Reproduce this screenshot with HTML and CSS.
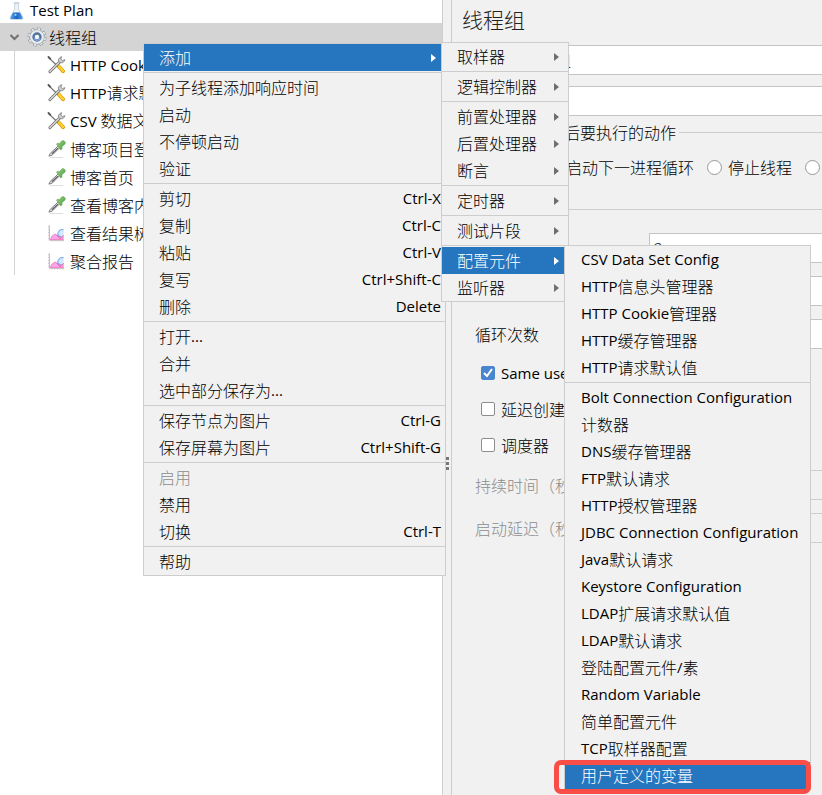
FILE: index.html
```html
<!DOCTYPE html>
<html lang="zh-CN">
<head>
<meta charset="utf-8">
<title>Test Plan</title>
<link rel="stylesheet" href="styles.css">
</head>
<body>
<svg class="defs" aria-hidden="true">
  <defs>
    <linearGradient id="green" x1="0" y1="0" x2="1" y2="1"><stop offset="0" stop-color="#9bd487"/><stop offset="1" stop-color="#4a9a3c"/></linearGradient>
    <linearGradient id="flask" x1="0" y1="0" x2="1" y2="0"><stop offset="0" stop-color="#5aa5ea"/><stop offset=".5" stop-color="#1765c4"/><stop offset="1" stop-color="#4c9be8"/></linearGradient>
    <symbol id="tools" viewBox="0 0 20 20">
      <path d="M12 11l5 5.500" stroke="#cf9500" stroke-width="4" stroke-linecap="round"/>
      <path d="M12 11l5 5.500" stroke="#ffcf2e" stroke-width="2.600" stroke-linecap="round"/>
      <path d="M2 2.500l9 8.500" stroke="#777" stroke-width="1.400" stroke-linecap="round"/>
      <path d="M1.500 1.500l2 2" stroke="#555" stroke-width="2" stroke-linecap="round"/>
      <path d="M3 17L13.500 6.500" stroke="#666" stroke-width="3" stroke-linecap="round"/>
      <path d="M3 17L13.500 6.500" stroke="#dcdcdc" stroke-width="1.500" stroke-linecap="round"/>
      <path d="M15.500 1.300a4 4 0 0 0-3.200 5.400 4 4 0 0 0 6.600-2.300l-2.600.9-1.800-1.500z" fill="#cfcfcf" stroke="#808080" stroke-width=".9"/>
    </symbol>
    <symbol id="dropper" viewBox="0 0 20 20">
      <path d="M3 19h14" stroke="#dcdcdc" stroke-width="1"/>
      <path d="M2 17.500l1.500-3 8-7.500 1.800 1.800-8 7.700z" fill="#eee" stroke="#777" stroke-width="1"/>
      <path d="M5 15.200l6.500-6.200" stroke="#555" stroke-width="1.200"/>
      <path d="M10 4.800l1.500-1 1.500.8 2.500-3c1.600-1.400 4.800.9 3.400 3.200l-3.300 2.900.3 2.100-1.500 1.200z" fill="url(#green)" stroke="#5fa352" stroke-width=".6"/>
    </symbol>
    <symbol id="chart" viewBox="0 0 20 20">
      <path d="M2.500 2v15.500H18" fill="none" stroke="#b0b0b0" stroke-width="1"/>
      <path d="M1 3.500h2M1 6.500h2M1 9.500h2M1 12.500h2M1 15.500h2M5 17v2M8 17v2M11 17v2M14 17v2M17 17v2" stroke="#c8c8c8" stroke-width="1"/>
      <path d="M3.500 17l1.500-3.500 3.500-2.500 3.500 2.500 5-1V17z" fill="#fba6ea" stroke="#ee6cb4" stroke-width=".8"/>
      <path d="M17.500 6.500c-4-.8-6.500 2-6 5.500 1.500 1.800 4 2.500 6 1.500z" fill="#d3e8ff"/>
      <path d="M17.500 6.500c-4-.8-6.500 2-6 5.500 1 1.300 2.300 2 3.500 2.200" fill="none" stroke="#7aacee" stroke-width="1.100"/>
      <path d="M10.500 12l3 4 4-3.500" fill="none" stroke="#e2609f" stroke-width="1"/>
    </symbol>
  </defs>
</svg>
<div class="app">
  <nav class="tree" aria-label="测试计划">
    <div class="node root">
      <svg class="flask" viewBox="0 0 16 20" aria-hidden="true">
        <path d="M6 1.500h4v6.500l4.800 9c.5 1-.2 2-1.300 2h-11c-1.100 0-1.800-1-1.300-2L6 8z" fill="#edf3f9" stroke="#bccad8" stroke-width=".8"/>
        <path d="M4.200 11.500h7.600l2.600 5.400c.4.900 0 1.600-1 1.600H2.600c-1 0-1.400-.7-1-1.600z" fill="url(#flask)"/>
        <path d="M5 1.500h6" stroke="#c3cad0" stroke-width="1.400"/><circle cx="7" cy="14" r="1.200" fill="#a8d3fb"/>
      </svg>
      <span class="lat">Test Plan</span>
    </div>
    <div class="node selected">
      <svg class="chevron" viewBox="0 0 10 8" aria-hidden="true"><path d="M1 2l4 4 4-4" fill="none" stroke="#707070" stroke-width="2"/></svg>
      <svg class="gear" viewBox="0 0 20 20" aria-hidden="true">
        <circle cx="10" cy="10" r="8.200" fill="none" stroke="#8f949a" stroke-width="2.600" stroke-dasharray="3.640 2.800"/>
        <circle cx="10" cy="10" r="7.400" fill="#e8ebee" stroke="#9a9fa5" stroke-width=".9"/>
        <circle cx="10" cy="10" r="8.200" fill="none" stroke="#e8ebee" stroke-width="1.600" stroke-dasharray="2.440 4" stroke-dashoffset="-.6"/>
        <circle cx="10" cy="10" r="3.500" fill="#f6f9fc" stroke="#52749f" stroke-width="2.400"/>
        <path d="M7 11.500a3.500 3.500 0 0 0 6 0" fill="none" stroke="#7aa5dc" stroke-width="1.600"/>
      </svg>
      <span>线程组</span>
    </div>
    <div class="children">
      <div class="node"><svg class="icon" aria-hidden="true"><use href="#tools"/></svg><span><span class="lat">HTTP Cookie</span>管理器</span></div>
      <div class="node"><svg class="icon" aria-hidden="true"><use href="#tools"/></svg><span><span class="lat">HTTP</span>请求默认值</span></div>
      <div class="node"><svg class="icon" aria-hidden="true"><use href="#tools"/></svg><span><span class="lat">CSV </span>数据文件设置</span></div>
      <div class="node"><svg class="icon" aria-hidden="true"><use href="#dropper"/></svg><span>博客项目登录</span></div>
      <div class="node"><svg class="icon" aria-hidden="true"><use href="#dropper"/></svg><span>博客首页</span></div>
      <div class="node"><svg class="icon" aria-hidden="true"><use href="#dropper"/></svg><span>查看博客内容</span></div>
      <div class="node"><svg class="icon" aria-hidden="true"><use href="#chart"/></svg><span>查看结果树</span></div>
      <div class="node"><svg class="icon" aria-hidden="true"><use href="#chart"/></svg><span>聚合报告</span></div>
    </div>
  </nav>
  <div class="splitter" role="separator"><i></i><i></i><i></i></div>
  <main class="editor">
    <h1>线程组</h1>
    <div class="field"><label for="name">名称：</label><input id="name" type="text" value="线程组"></div>
    <div class="field"><label for="note">注释：</label><input id="note" type="text"></div>
    <fieldset class="group">
      <legend>在取样器错误后要执行的动作</legend>
      <div class="radios">
        <label><input type="radio" name="act">继续</label>
        <label><input type="radio" name="act">启动下一进程循环</label>
        <label><input type="radio" name="act">停止线程</label>
        <label><input type="radio" name="act" aria-label="停止测试"></label>
      </div>
    </fieldset>
    <fieldset class="group props">
      <legend>线程属性</legend>
      <div class="prop"><label for="threads">线程数：</label><input id="threads" type="text" value="2"></div>
      <div class="prop"><label for="ramp"><span class="lat">Ramp-Up</span></label><input id="ramp" type="text"></div>
      <div class="prop"><label for="loops">循环次数</label><input id="loops" type="text"></div>
      <label class="check"><input type="checkbox" checked><span class="lat">Same user on each iteration</span></label>
      <label class="check"><input type="checkbox">延迟创建线程直到需要</label>
      <label class="check"><input type="checkbox">调度器</label>
      <div class="prop"><label for="duration">持续时间（秒）</label><input id="duration" type="text" disabled></div>
      <div class="prop"><label for="delay">启动延迟（秒）</label><input id="delay" type="text" disabled></div>
    </fieldset>
  </main>
</div>

<div class="menu context" role="menu">
  <button class="on arrow">添加</button>
  <hr>
  <button>为子线程添加响应时间</button>
  <button>启动</button>
  <button>不停顿启动</button>
  <button>验证</button>
  <hr>
  <button>剪切<kbd>Ctrl-X</kbd></button>
  <button>复制<kbd>Ctrl-C</kbd></button>
  <button>粘贴<kbd>Ctrl-V</kbd></button>
  <button>复写<kbd>Ctrl+Shift-C</kbd></button>
  <button>删除<kbd>Delete</kbd></button>
  <hr>
  <button>打开<span class="lat">...</span></button>
  <button>合并</button>
  <button>选中部分保存为<span class="lat">...</span></button>
  <hr>
  <button>保存节点为图片<kbd>Ctrl-G</kbd></button>
  <button>保存屏幕为图片<kbd>Ctrl+Shift-G</kbd></button>
  <hr>
  <button disabled>启用</button>
  <button>禁用</button>
  <button>切换<kbd>Ctrl-T</kbd></button>
  <hr>
  <button>帮助</button>
</div>

<div class="menu add" role="menu">
  <button class="arrow">取样器</button>
  <hr>
  <button class="arrow">逻辑控制器</button>
  <hr>
  <button class="arrow">前置处理器</button>
  <button class="arrow">后置处理器</button>
  <button class="arrow">断言</button>
  <hr>
  <button class="arrow">定时器</button>
  <hr>
  <button class="arrow">测试片段</button>
  <hr>
  <button class="arrow on">配置元件</button>
  <button class="arrow">监听器</button>
</div>

<div class="menu config" role="menu">
  <button><span class="lat">CSV Data Set Config</span></button>
  <button><span class="lat">HTTP</span>信息头管理器</button>
  <button><span class="lat">HTTP Cookie</span>管理器</button>
  <button><span class="lat">HTTP</span>缓存管理器</button>
  <button><span class="lat">HTTP</span>请求默认值</button>
  <hr>
  <button><span class="lat">Bolt Connection Configuration</span></button>
  <button>计数器</button>
  <button><span class="lat">DNS</span>缓存管理器</button>
  <button><span class="lat">FTP</span>默认请求</button>
  <button><span class="lat">HTTP</span>授权管理器</button>
  <button><span class="lat">JDBC Connection Configuration</span></button>
  <button><span class="lat">Java</span>默认请求</button>
  <button><span class="lat">Keystore Configuration</span></button>
  <button><span class="lat">LDAP</span>扩展请求默认值</button>
  <button><span class="lat">LDAP</span>默认请求</button>
  <button>登陆配置元件<span class="lat">/</span>素</button>
  <button><span class="lat">Random Variable</span></button>
  <button>简单配置元件</button>
  <button><span class="lat">TCP</span>取样器配置</button>
  <button class="on">用户定义的变量</button>
</div>
<div class="marker"></div>
</body>
</html>
```
FILE: styles.css
```css
* { box-sizing: border-box; }

body {
  margin: 0;
  height: 100vh;
  overflow: hidden;
  background: #f1f1f1;
  color: #000;
  font: 300 16px/27px "Noto Sans CJK SC", sans-serif;
  white-space: nowrap;
}

input, button { font: inherit; color: inherit; }
.defs { position: absolute; width: 0; height: 0; }
.lat, kbd { font-family: "Open Sans", sans-serif; font-size: 15px; font-weight: 400; white-space: pre; }

.app { display: flex; height: 100vh; }

/* Tree */
.tree { flex: 0 0 442px; background: #fff; overflow: hidden; }
.node { display: flex; align-items: center; height: 28px; }
.root { height: 23px; padding: 0 0 2px 9px; gap: 6px; }
.flask { width: 15px; height: 20px; }
.selected { background: #d4d4d4; padding-left: 9px; }
.chevron { width: 11px; height: 8px; margin-right: 7px; }
.gear { width: 20px; height: 20px; margin-right: 2px; }
.children { margin-left: 14px; padding-left: 32px; border-left: 1px solid #d4d4d4; }
.icon { width: 19px; height: 20px; margin-right: 4px; }

/* Splitter */
.splitter {
  flex: 0 0 10px;
  display: flex;
  flex-direction: column;
  align-items: center;
  gap: 2px;
  padding-top: 457px;
  border: solid #cdcdcd;
  border-width: 0 1px;
}
.splitter i { width: 3px; height: 3px; background: #777; }

/* Editor */
.editor { flex: 1; min-width: 0; padding-top: 5px; overflow: hidden; }
h1 { margin: 0 0 12px 10px; font-size: 21px; font-weight: 300; line-height: 28px; color: #222; }
.field { display: flex; align-items: center; margin: 0 0 11px 16px; }
.field + .field { margin-bottom: 3px; }
.field label { flex: 0 0 50px; }
.field input, .prop input {
  flex: 1;
  min-width: 0;
  height: 30px;
  padding: 0 4px;
  border: 1px solid #c4c4c4;
  border-right: 0;
  background: #fff;
}
.group { border: 0; margin: 0; padding: 0; min-width: 0; }
.group legend {
  display: flex;
  align-items: center;
  gap: 3px;
  width: 100%;
  height: 27px;
  padding: 0 0 0 16px;
}
.group legend::after { content: ""; flex: 1; height: 1px; background: #cdcdcd; }
.radios { display: flex; gap: 13px; padding: 8px 0 15px 27px; }
.radios label { display: flex; flex: none; align-items: center; gap: 6px; }
.radios input {
  appearance: none;
  width: 15px;
  height: 15px;
  margin: 0;
  border: 1px solid #999;
  border-radius: 50%;
  background: #fff;
}
.props legend { margin-bottom: 10px; }
.prop { display: flex; align-items: center; height: 30px; margin: 0 0 13px 23px; }
.prop label { flex: 0 0 174px; }
.prop:has(:disabled) { color: #8c8c8c; }
.prop input:disabled { background: #f1f1f1; border-color: #cdcdcd; }
.check { display: flex; align-items: center; gap: 6px; height: 36px; margin-left: 29px; }
.prop + .check { margin-top: -7px; }
.check + .prop { margin-top: 7px; }
.check input {
  appearance: none;
  flex: none;
  width: 14px;
  height: 14px;
  margin: 0;
  border: 1px solid #8e8e8e;
  border-radius: 2px;
  background: #fff;
}
.check input:checked {
  border-color: #4a86cf;
  background: #4a86cf url("data:image/svg+xml,%3Csvg xmlns='http://www.w3.org/2000/svg' viewBox='0 0 12 12'%3E%3Cpath d='M2 6l3 3 5-7' fill='none' stroke='white' stroke-width='2'/%3E%3C/svg%3E");
}

/* Menus */
.menu {
  position: absolute;
  display: flex;
  flex-direction: column;
  border: 1px solid #cdcdcd;
  background: #f1f1f1;
}
.context { left: 143px; top: 43px; width: 303px; }
.add { left: 441px; top: 42px; width: 128px; }
.config { left: 564px; top: 245px; width: 247px; }
.menu button {
  display: flex;
  align-items: center;
  height: 27px;
  padding: 0 4px 0 15px;
  border: 0;
  background: none;
  text-align: left;
}
.menu.config button { padding-left: 16px; }
.menu button:disabled { color: #8c8c8c; }
.menu button.on { background: #2675bf; color: #fff; }
.menu hr { width: 100%; height: 1px; margin: 1px 0; border: 0; background: #cdcdcd; }
.menu kbd { margin-left: auto; }
.arrow::after {
  content: "";
  margin-left: auto;
  margin-right: 5px;
  border: solid transparent;
  border-width: 4px 0 4px 5px;
  border-left-color: #6e6e6e;
}
.arrow.on::after { border-left-color: #fff; }

.marker {
  position: absolute;
  left: 554px;
  top: 760px;
  width: 257px;
  height: 34px;
  border: 5px solid #f94d47;
  border-radius: 7px;
}
```
